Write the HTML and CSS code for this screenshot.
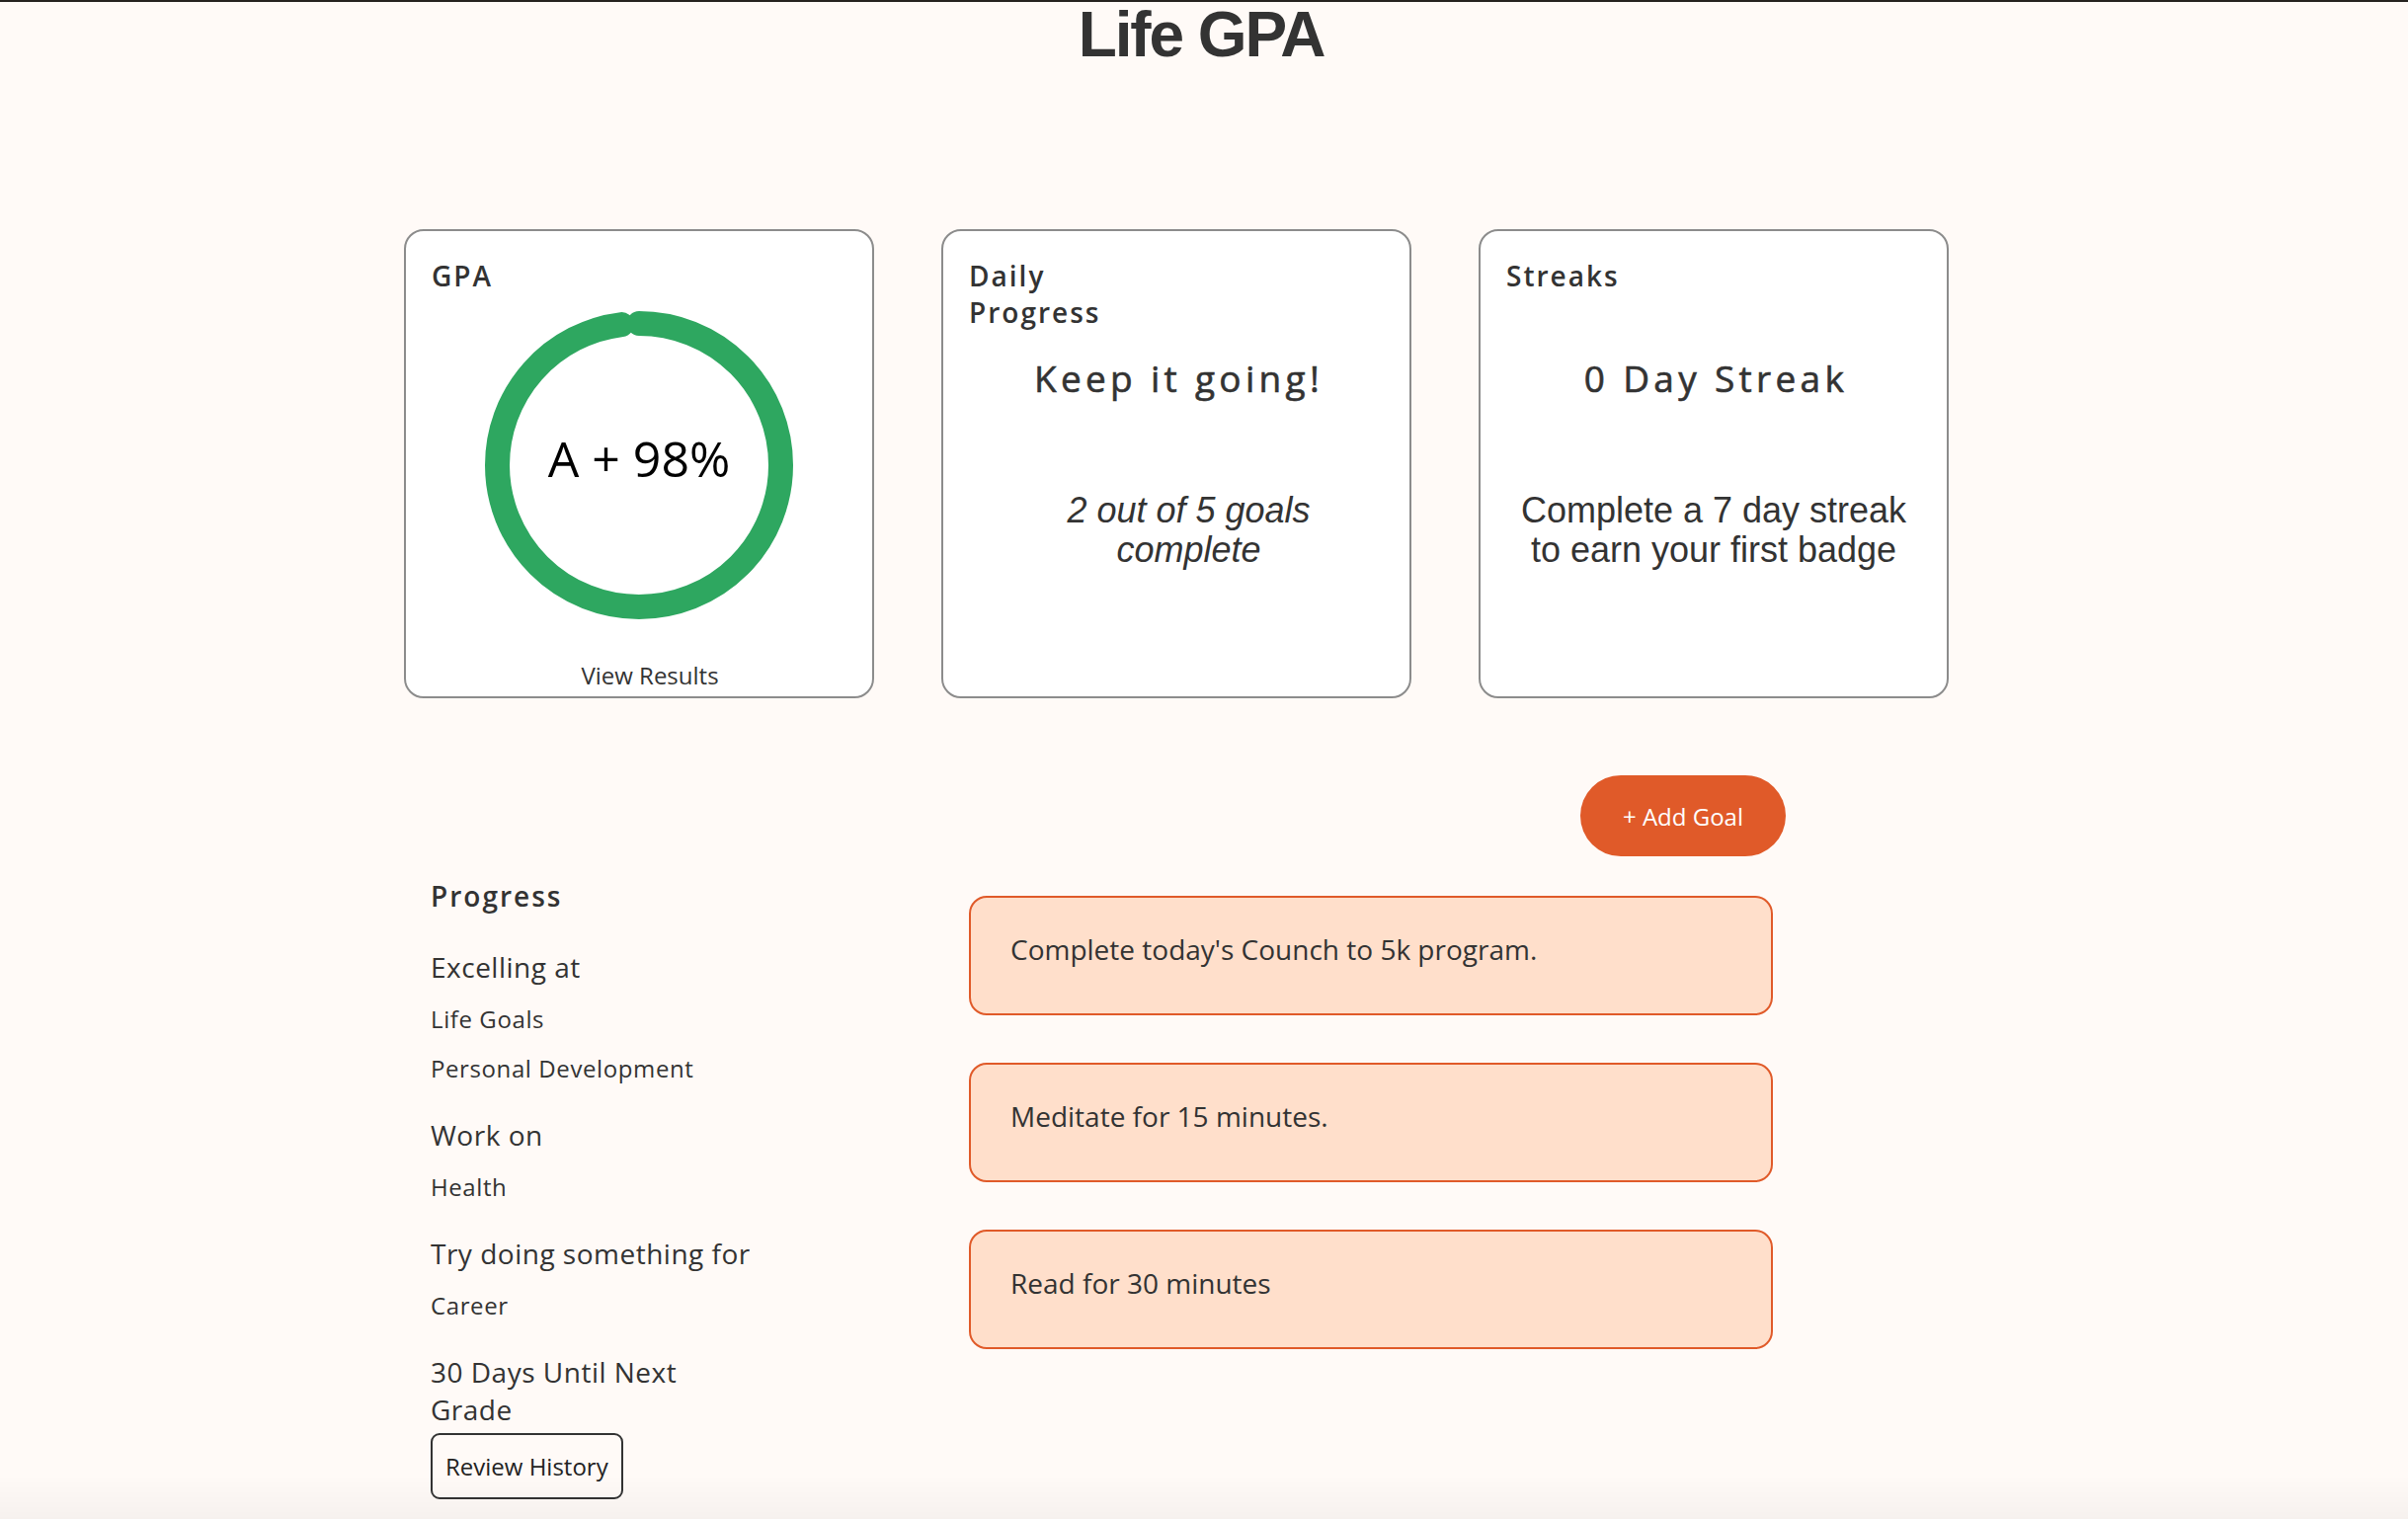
FILE: index.html
```html
<!DOCTYPE html>
<html lang="en">
<head>
<meta charset="utf-8">
<title>Life GPA</title>
<link rel="stylesheet" href="styles.css">
</head>
<body>
<header class="topbar">
  <h1 class="title">Life GPA</h1>
</header>
<main>
  <section class="cards">
    <article class="card">
      <h2 class="card-title">GPA</h2>
      <div class="ring">
        <svg class="ring-svg" width="312" height="312" viewBox="0 0 312 312" aria-hidden="true">
          <circle cx="156" cy="156" r="143.5" fill="none" stroke="#2ea760" stroke-width="25" stroke-linecap="round" stroke-dasharray="883.6 901.6" transform="rotate(-90 156 156)"/>
        </svg>
        <span class="ring-label">A + 98%</span>
      </div>
      <a class="view-results" href="#">View Results</a>
    </article>
    <article class="card">
      <h2 class="card-title card-title-tall">Daily<br>Progress</h2>
      <p class="card-main">Keep it going!</p>
      <p class="card-sub card-sub-italic">2 out of 5 goals<br>complete</p>
    </article>
    <article class="card">
      <h2 class="card-title card-title-tall">Streaks</h2>
      <p class="card-main">0 Day Streak</p>
      <p class="card-sub">Complete a 7 day streak<br>to earn your first badge</p>
    </article>
  </section>

  <section class="lower">
    <aside class="progress">
      <h2 class="card-title">Progress</h2>
      <div class="group group-first">
        <h3 class="group-title">Excelling at</h3>
        <p class="group-item">Life Goals</p>
        <p class="group-item">Personal Development</p>
      </div>
      <div class="group">
        <h3 class="group-title">Work on</h3>
        <p class="group-item">Health</p>
      </div>
      <div class="group">
        <h3 class="group-title">Try doing something for</h3>
        <p class="group-item">Career</p>
      </div>
      <div class="group">
        <h3 class="group-title">30 Days Until Next<br>Grade</h3>
        <button class="review-btn" type="button">Review History</button>
      </div>
    </aside>
    <div class="goals-col">
      <button class="add-goal" type="button">+ Add Goal</button>
      <ul class="goals">
        <li class="goal">Complete today's Counch to 5k program.</li>
        <li class="goal">Meditate for 15 minutes.</li>
        <li class="goal">Read for 30 minutes</li>
      </ul>
    </div>
  </section>
</main>
</body>
</html>
```

FILE: styles.css
```css
* {
  box-sizing: border-box;
}

html,
body {
  margin: 0;
}

body {
  background: #fffaf7;
  color: #333;
  font-family: "Open Sans", "Liberation Sans", sans-serif;
  border-top: 2px solid #26221f;
}

body::after {
  content: "";
  position: fixed;
  left: 0;
  right: 0;
  bottom: 0;
  height: 44px;
  background: linear-gradient(rgba(0, 0, 0, 0), rgba(0, 0, 0, 0.035));
  pointer-events: none;
}

.title {
  margin: 0;
  padding-top: 1px;
  padding-right: 6px;
  font-family: "Liberation Sans", Arial, sans-serif;
  font-weight: 700;
  font-size: 64px;
  line-height: 64px;
  letter-spacing: -2.1px;
  text-align: center;
  color: #333;
}

/* ---------- top cards ---------- */
.cards {
  display: flex;
  gap: 68px;
  padding-left: 409px;
  margin-top: 165px;
}

.card {
  width: 476px;
  height: 475px;
  background: #fff;
  border: 2px solid #8c8c8c;
  border-radius: 20px;
  padding: 27px 26px 0;
  display: flex;
  flex-direction: column;
}

.card-title {
  margin: 0;
  font-size: 28px;
  font-weight: 600;
  letter-spacing: 2px;
  line-height: 37px;
  color: #333;
}

.card-title-tall {
  min-height: 74px;
}

.ring {
  display: grid;
  place-items: center;
  width: 312px;
  height: 312px;
  margin: 17px auto 0;
}

.ring > * {
  grid-area: 1 / 1;
}

.ring-svg {
  display: block;
}

.ring-label {
  font-size: 50px;
  color: #000;
  padding-bottom: 14px;
}

.view-results {
  margin-top: 40px;
  padding-left: 22px;
  text-align: center;
  font-size: 24px;
  color: #333;
  text-decoration: none;
}

.card-main {
  margin: 22px 0 0;
  padding-left: 5px;
  text-align: center;
  font-size: 37px;
  font-weight: 400;
  letter-spacing: 4.3px;
  -webkit-text-stroke: 0.6px #333;
  color: #333;
}

.card-sub {
  margin: 89px 0 0;
  text-align: center;
  font-family: "Liberation Sans", Arial, sans-serif;
  font-size: 36px;
  line-height: 40px;
  color: #333;
}

.card-sub-italic {
  font-style: italic;
  padding-left: 25px;
}

/* ---------- lower section ---------- */
.lower {
  display: flex;
  align-items: flex-start;
  padding-left: 436px;
  margin-top: 78px;
}

.progress {
  width: 340px;
  margin-top: 104px;
}

.group {
  margin-top: 32px;
}

.group-first {
  margin-top: 34px;
}

.group-title {
  margin: 0;
  font-size: 28px;
  font-weight: 400;
  letter-spacing: 0.5px;
  color: #333;
}

.group-item {
  margin: 17px 0 0;
  font-size: 24px;
  letter-spacing: 0.6px;
  color: #333;
}

.review-btn {
  display: block;
  margin-top: 5px;
  padding: 15px 13px;
  font-family: "Open Sans", sans-serif;
  font-size: 24px;
  line-height: normal;
  color: #222;
  background: transparent;
  border: 2px solid #333;
  border-radius: 9px;
}

.goals-col {
  margin-left: 205px;
  width: 827px;
  display: flex;
  flex-direction: column;
}

.add-goal {
  align-self: flex-end;
  height: 82px;
  padding: 0 43px;
  border: none;
  border-radius: 41px;
  background: #e05a29;
  color: #fff;
  font-family: "Open Sans", sans-serif;
  font-size: 24px;
  margin-bottom: 40px;
}

.goals {
  list-style: none;
  margin: 0;
  padding: 0;
  width: 814px;
  display: flex;
  flex-direction: column;
  gap: 48px;
}

.goal {
  height: 121px;
  border: 2px solid #e05a29;
  border-radius: 18px;
  background: #ffdfcb;
  padding: 33px 40px 0;
  font-size: 28px;
  color: #333;
}
```
